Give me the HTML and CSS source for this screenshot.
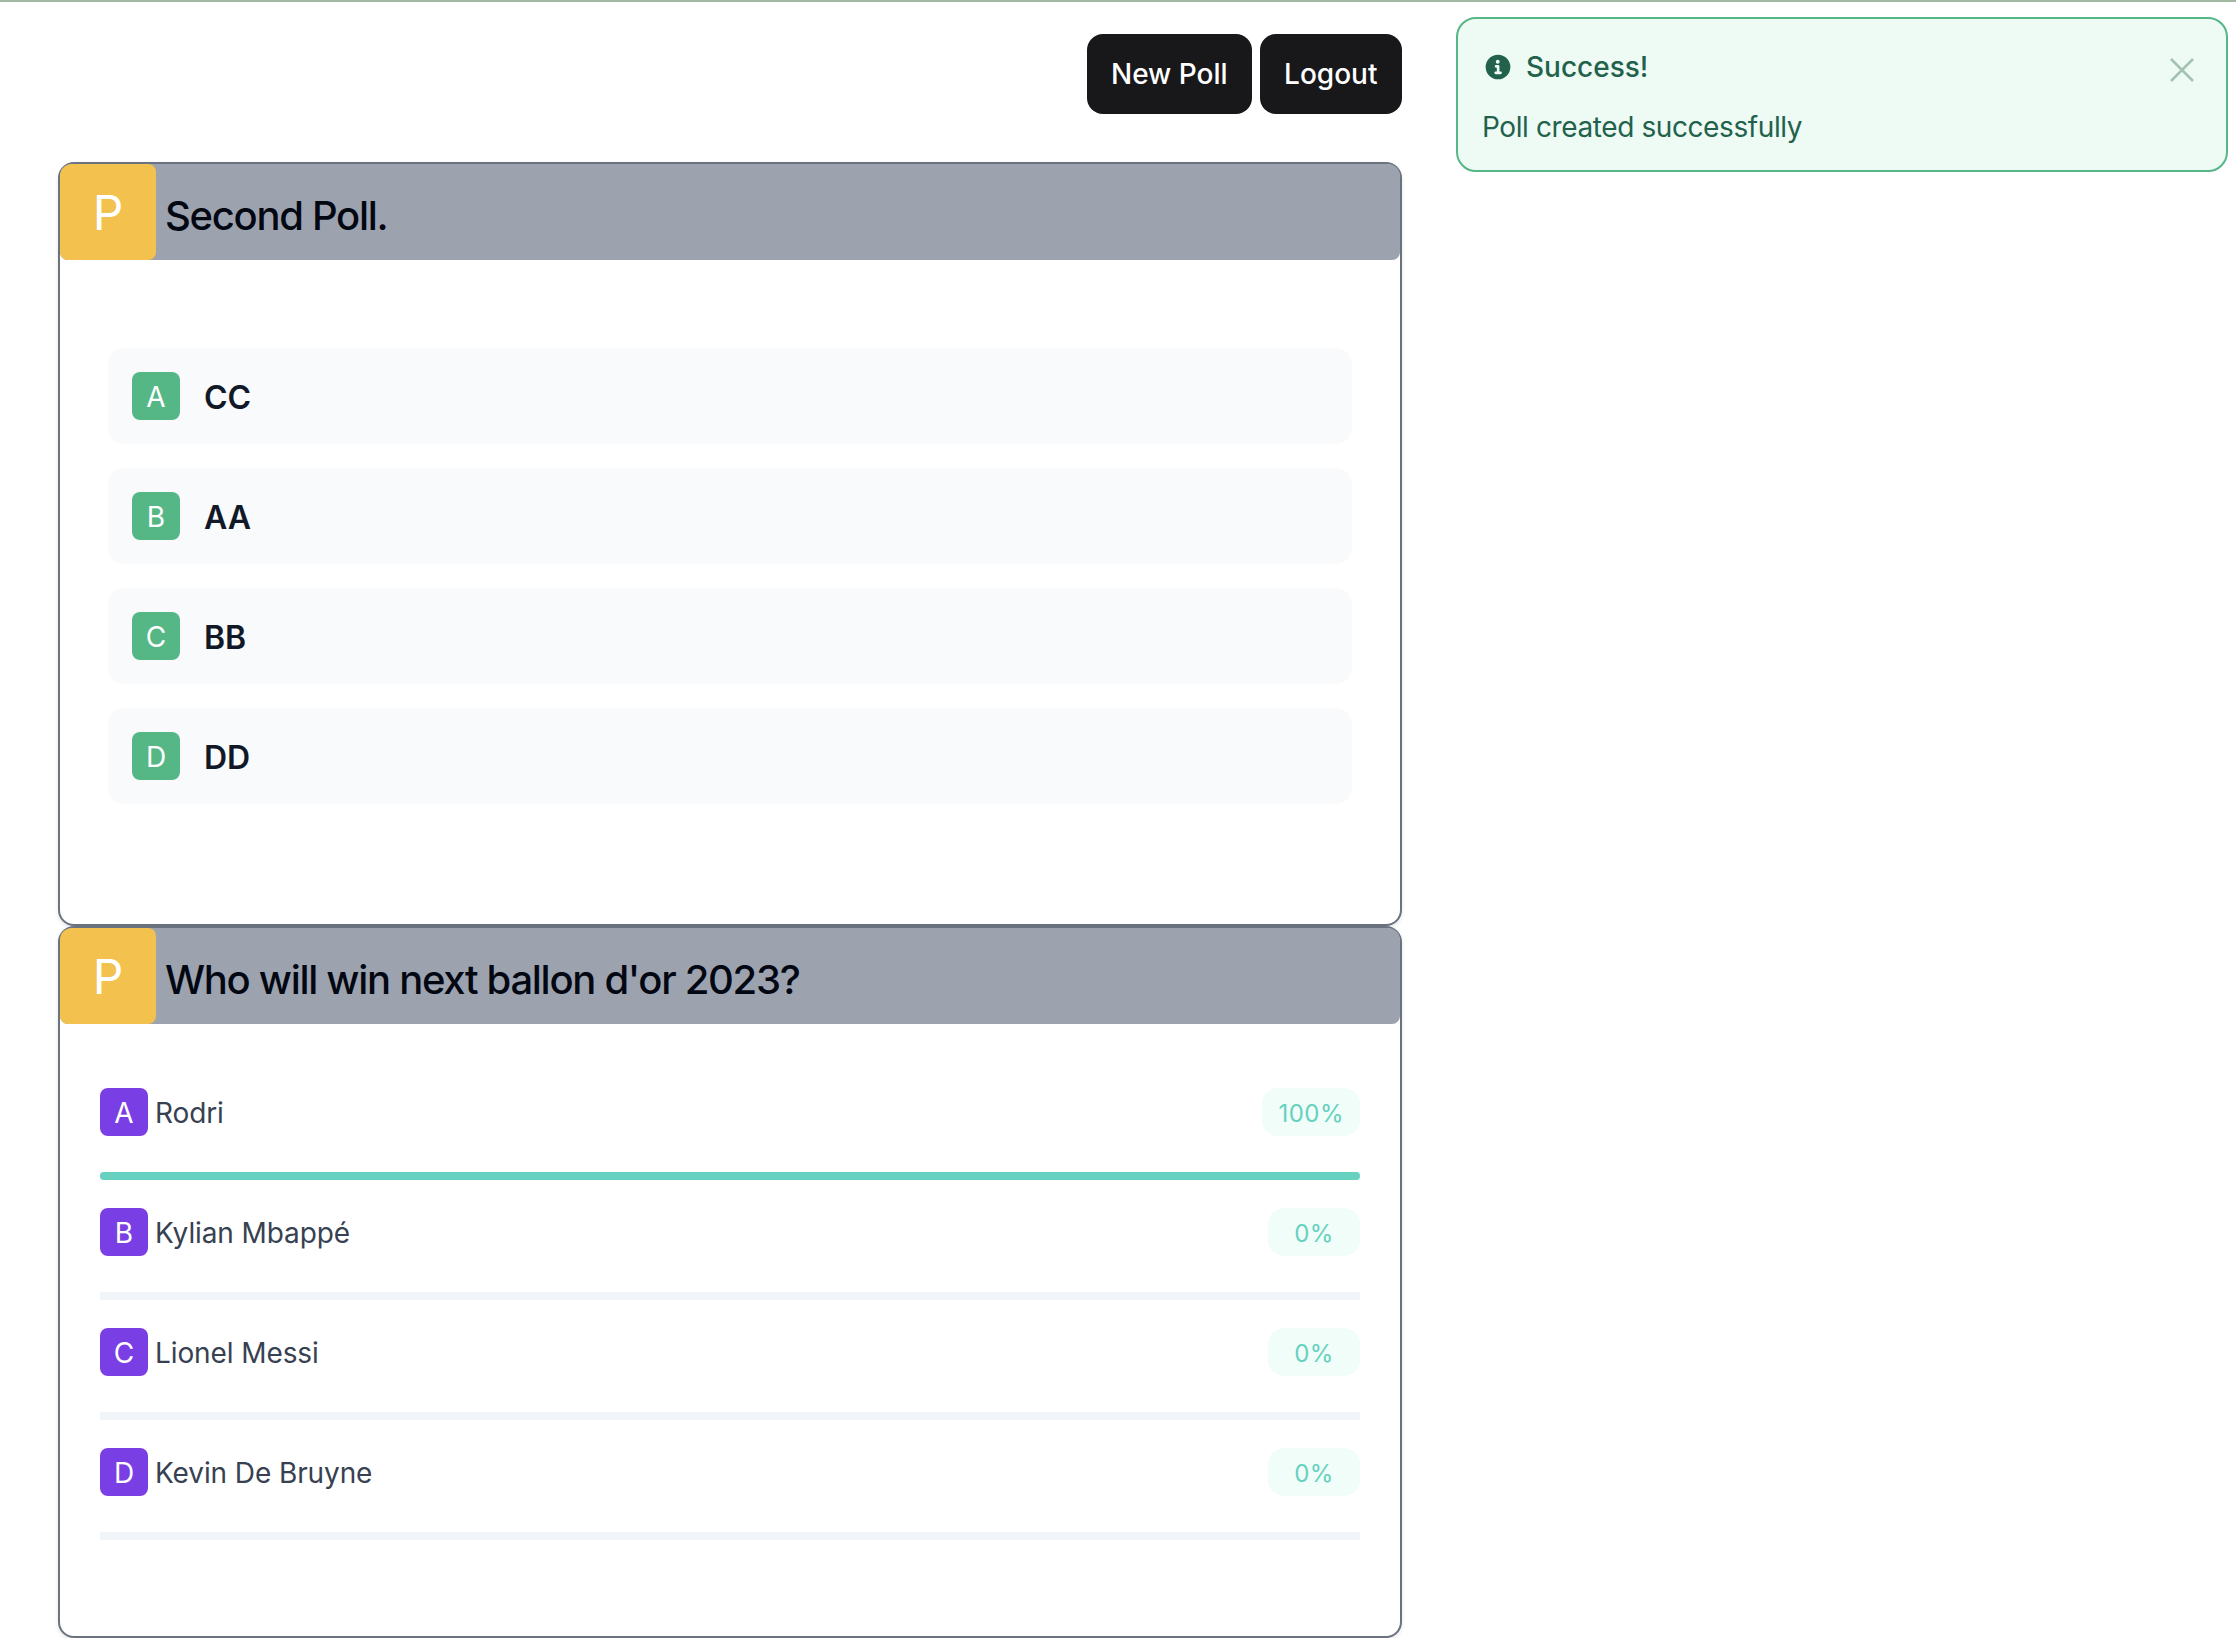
FILE: index.html
```html
<!DOCTYPE html>
<html lang="en">
<head>
    <meta charset="UTF-8">
    <meta name="viewport" content="width=device-width, initial-scale=1.0">
    <title>Polls</title>
    <link rel="stylesheet" href="styles.css">
</head>
<body>
    <div class="container">
        <div class="actions">
            <button class="btn new-poll">New Poll</button>
            <button class="btn logout">Logout</button>
        </div>

        <div class="poll-card first">
            <div class="poll-head">
                <span class="poll-letter">P</span>
                <h2>Second Poll.</h2>
            </div>
            <div class="options">
                <div class="option"><span class="tag green">A</span><strong>CC</strong></div>
                <div class="option"><span class="tag green">B</span><strong>AA</strong></div>
                <div class="option"><span class="tag green">C</span><strong>BB</strong></div>
                <div class="option"><span class="tag green">D</span><strong>DD</strong></div>
            </div>
        </div>

        <div class="poll-card second">
            <div class="poll-head">
                <span class="poll-letter">P</span>
                <h2>Who will win next ballon d'or 2023?</h2>
            </div>
            <div class="results">
                <div class="result">
                    <div class="result-row">
                        <span class="tag purple">A</span>
                        <span class="result-name">Rodri</span>
                        <span class="percent">100%</span>
                    </div>
                    <div class="track"><div class="fill" style="width: 100%"></div></div>
                </div>
                <div class="result">
                    <div class="result-row">
                        <span class="tag purple">B</span>
                        <span class="result-name">Kylian Mbappé</span>
                        <span class="percent">0%</span>
                    </div>
                    <div class="track"><div class="fill" style="width: 0%"></div></div>
                </div>
                <div class="result">
                    <div class="result-row">
                        <span class="tag purple">C</span>
                        <span class="result-name">Lionel Messi</span>
                        <span class="percent">0%</span>
                    </div>
                    <div class="track"><div class="fill" style="width: 0%"></div></div>
                </div>
                <div class="result">
                    <div class="result-row">
                        <span class="tag purple">D</span>
                        <span class="result-name">Kevin De Bruyne</span>
                        <span class="percent">0%</span>
                    </div>
                    <div class="track"><div class="fill" style="width: 0%"></div></div>
                </div>
            </div>
        </div>
    </div>

    <div class="toast">
        <div class="toast-title">
            <svg class="toast-icon" viewBox="0 0 20 20" aria-hidden="true">
                <path fill="currentColor" d="M10 .5a9.5 9.5 0 1 0 0 19 9.5 9.5 0 0 0 0-19ZM9.8 4.5a1.5 1.5 0 1 1 0 3 1.5 1.5 0 0 1 0-3ZM12 15.5H8.2a1 1 0 0 1 0-2h.9v-3h-.6a1 1 0 0 1 0-2h1.6a1 1 0 0 1 1 1v4h.9a1 1 0 0 1 0 2Z"/>
            </svg>
            <span>Success!</span>
        </div>
        <p>Poll created successfully</p>
        <svg class="toast-close" viewBox="0 0 24 24" aria-hidden="true">
            <path d="M1 1l22 22M23 1L1 23"/>
        </svg>
    </div>
</body>
</html>
```

FILE: styles.css
```css
* {
    box-sizing: border-box;
}
body {
    font-family: Inter, "Noto Sans", sans-serif;
    margin: 0;
    padding: 0;
    background-color: #fff;
    border-top: 2px solid #a3b8a3;
}
.container {
    width: 1344px;
    margin-left: 58px;
}
.actions {
    display: flex;
    justify-content: flex-end;
    gap: 8px;
    padding-top: 32px;
    margin-bottom: 48px;
}
.btn {
    height: 80px;
    padding: 0 24px;
    background-color: #18181b;
    color: #fff;
    font-family: inherit;
    font-size: 28px;
    font-weight: 500;
    border: none;
    border-radius: 16px;
}
.logout {
    padding: 0 24.5px;
}
.poll-card {
    border: 2px solid #6b7280;
    border-radius: 16px;
    box-shadow: 0 2px 4px rgba(0,0,0,0.1);
    background-color: #fff;
}
.poll-card.first {
    height: 764px;
}
.poll-card.second {
    height: 712px;
}
.poll-head {
    display: flex;
    align-items: center;
    height: 96px;
    background-color: #9ca3af;
    border-radius: 12px 12px 8px 8px;
}
.poll-letter {
    display: flex;
    align-items: center;
    justify-content: center;
    width: 96px;
    height: 96px;
    flex-shrink: 0;
    background-color: #f2c14e;
    color: #fff;
    font-size: 48px;
    font-weight: 400;
    border-radius: 12px 8px 8px 8px;
}
.poll-head h2 {
    margin: 6px 0 0 9px;
    font-size: 40px;
    font-weight: 500;
    letter-spacing: -1.3px;
    color: #030712;
}
.options {
    display: flex;
    flex-direction: column;
    gap: 24px;
    padding: 88px 48px 0;
}
.option {
    display: flex;
    align-items: center;
    gap: 24px;
    height: 96px;
    padding: 0 24px;
    background-color: #f9fafb;
    border-radius: 16px;
}
.option strong {
    padding-top: 2px;
    font-size: 32px;
    font-weight: 600;
    color: #111827;
}
.tag {
    display: flex;
    align-items: center;
    justify-content: center;
    width: 48px;
    height: 48px;
    flex-shrink: 0;
    padding-top: 2px;
    color: #fff;
    font-size: 28px;
    border-radius: 8px;
}
.tag.green {
    background-color: #56b786;
}
.tag.purple {
    background-color: #7a3ee5;
}
.results {
    display: flex;
    flex-direction: column;
    gap: 28px;
    padding: 64px 40px 0;
}
.result-row {
    display: flex;
    align-items: center;
    gap: 7px;
    height: 48px;
    margin-bottom: 36px;
}
.result-name {
    flex: 1;
    padding-top: 2px;
    font-size: 28px;
    letter-spacing: -0.1px;
    color: #374151;
}
.percent {
    display: flex;
    align-items: center;
    justify-content: center;
    min-width: 92px;
    height: 48px;
    padding: 2px 16px 0;
    background-color: #f0fdf9;
    color: #66d1bf;
    font-size: 24px;
    letter-spacing: 0.5px;
    border-radius: 16px;
}
.track {
    height: 8px;
    background-color: #f1f5f9;
}
.fill {
    height: 8px;
    background-color: #66d1bf;
    border-radius: 4px;
}
.toast {
    position: absolute;
    top: 17px;
    left: 1456px;
    width: 772px;
    height: 155px;
    padding: 31px 24px 0 24px;
    background-color: #edfbf4;
    border: 2px solid #56b786;
    border-radius: 20px;
    color: #22614c;
}
.toast-title {
    display: flex;
    align-items: center;
    gap: 15px;
    font-size: 28px;
    font-weight: 500;
    line-height: 34px;
    margin-left: 3px;
}
.toast-icon {
    width: 26px;
    height: 26px;
}
.toast p {
    margin: 26px 0 0;
    font-size: 28px;
    line-height: 34px;
    letter-spacing: -0.4px;
}
.toast-close {
    position: absolute;
    top: 39px;
    right: 32px;
    width: 24px;
    height: 24px;
    fill: none;
    stroke: #a3c2b4;
    stroke-width: 2.5;
}
```
